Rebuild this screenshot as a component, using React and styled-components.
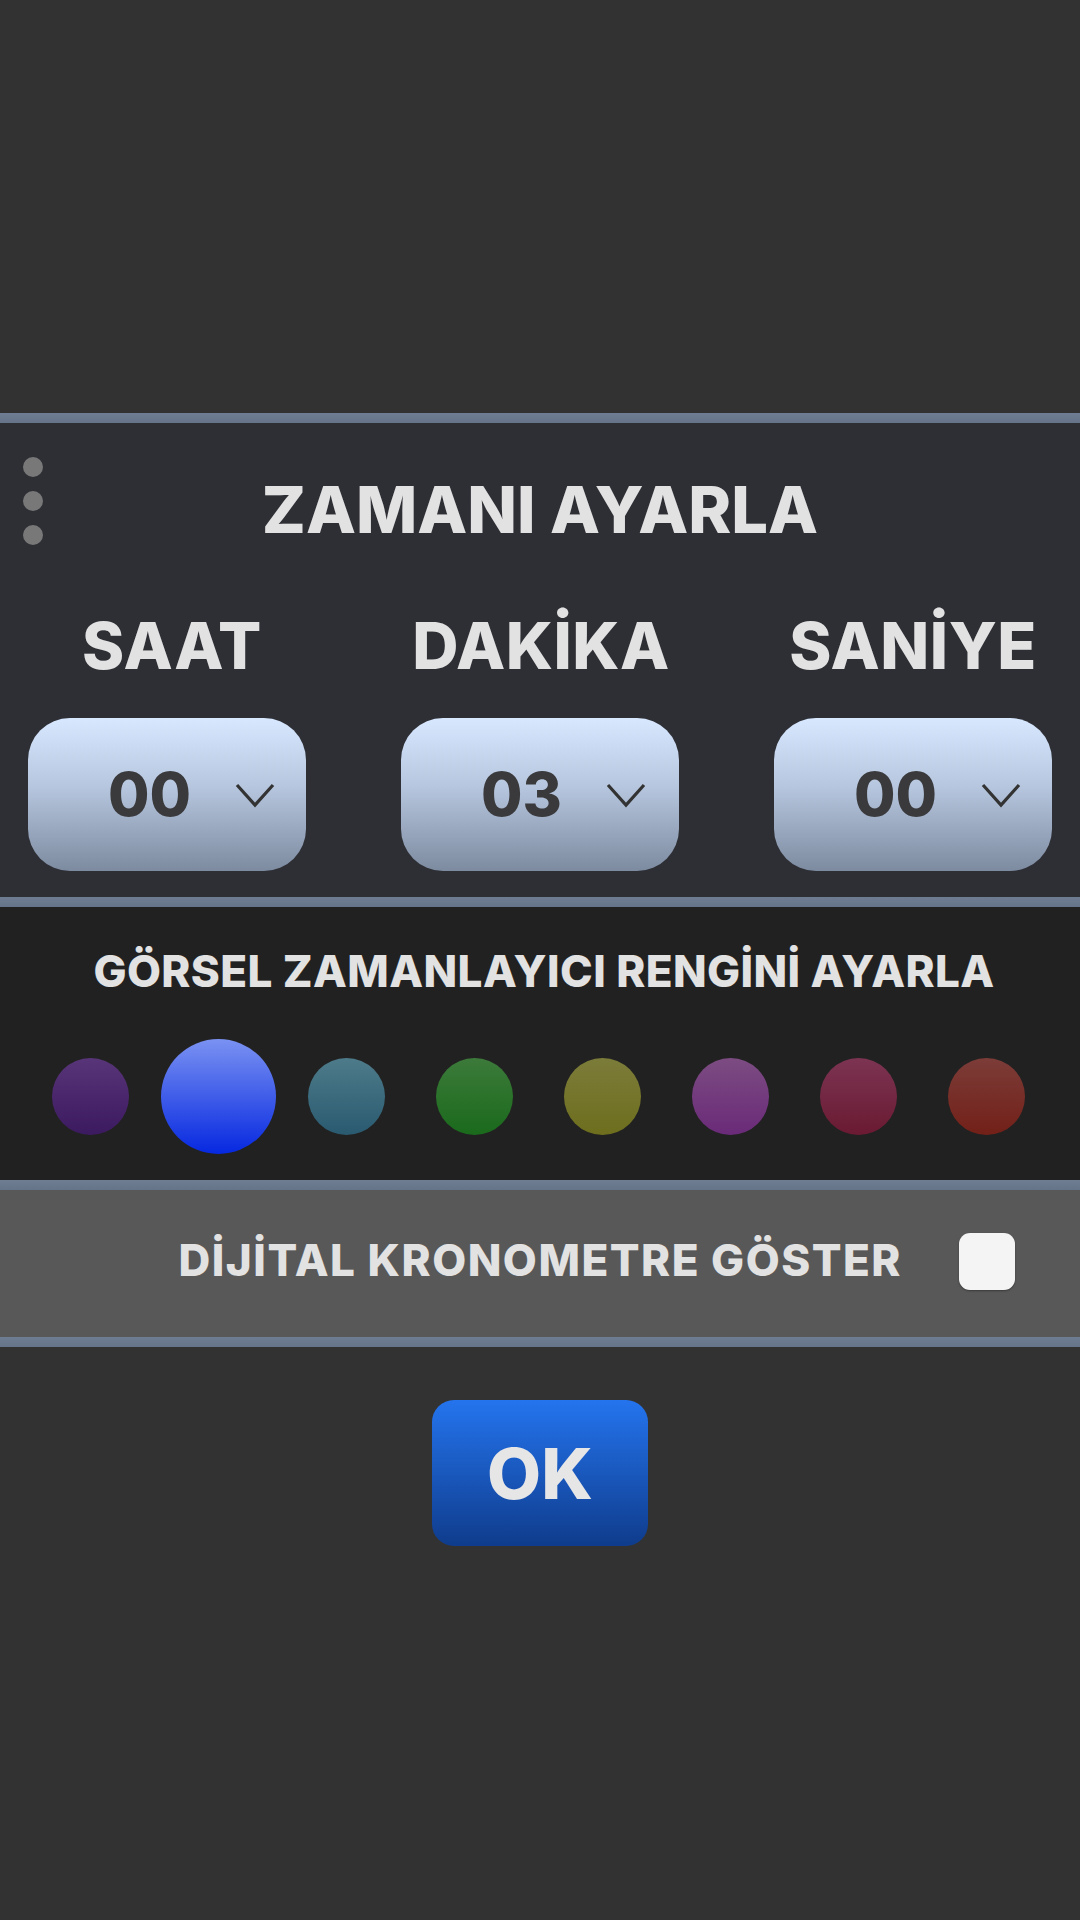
import React from "react";
import styled, { createGlobalStyle } from "styled-components";

const Global = createGlobalStyle`
  html, body { margin: 0; padding: 0; background: #323232; }
  body { font-family: "Inter", "Noto Sans", sans-serif; }
  * { box-sizing: border-box; }
`;

const Page = styled.div`
  width: 1080px;
  min-height: 1920px;
  background: #323232;
  display: flex;
  flex-direction: column;
  padding-top: 413px;
`;

const Divider = styled.div`
  height: 10px;
  background: linear-gradient(#6f7d93, #66748a);
`;

const TimeSection = styled.section`
  position: relative;
  background: #2e2f35;
  height: 474px;
  display: flex;
  flex-direction: column;
  align-items: center;
`;

const MenuDots = styled.div`
  position: absolute;
  left: 23px;
  top: 34px;
  display: flex;
  flex-direction: column;
  gap: 14px;
`;

const Dot = styled.span`
  width: 20px;
  height: 20px;
  border-radius: 50%;
  background: #787878;
`;

const Title = styled.h1`
  margin: 0;
  padding-top: ${(p) => p.$pt || 0}px;
  font-size: ${(p) => p.$size}px;
  font-weight: 800;
  line-height: 1;
  color: #e2e2e2;
  letter-spacing: ${(p) => p.$ls || 0}px;
  white-space: nowrap;
  transform: translateX(${(p) => p.$dx || 0}px);
`;

const Columns = styled.div`
  width: 100%;
  display: flex;
  justify-content: space-between;
  padding: 0 28px;
  margin-top: 72px;
`;

const Column = styled.div`
  width: 278px;
  display: flex;
  flex-direction: column;
  align-items: center;
`;

const Label = styled.div`
  font-size: 64px;
  font-weight: 800;
  line-height: 1;
  color: #e2e2e2;
  white-space: nowrap;
  letter-spacing: 0.5px;
  padding-left: ${(p) => p.$shift || 0}px;
`;

const Select = styled.div`
  margin-top: 40px;
  width: 278px;
  height: 153px;
  border-radius: 42px;
  background: linear-gradient(#d8e8ff 0%, #b6c6de 45%, #7d8ba0 100%);
  display: flex;
  align-items: center;
  padding-left: 80px;
  gap: 44px;
`;

const Value = styled.span`
  font-size: 60px;
  font-weight: 800;
  color: #3a3a3c;
  line-height: 1;
  margin-top: -2px;
`;

const ColorSection = styled.section`
  background: #212121;
  height: 273px;
  display: flex;
  flex-direction: column;
  align-items: center;
`;

const Swatches = styled.div`
  width: 100%;
  display: grid;
  grid-template-columns: repeat(8, 128px);
  padding-left: 26px;
  margin-top: 45px;
  align-items: center;
  height: 116px;
`;

const Cell = styled.div`
  display: flex;
  justify-content: center;
`;

const Swatch = styled.div`
  width: ${(p) => (p.$big ? 115 : 77)}px;
  height: ${(p) => (p.$big ? 115 : 77)}px;
  border-radius: 50%;
  background: linear-gradient(${(p) => p.$top}, ${(p) => p.$bottom});
`;

const CheckRow = styled.section`
  background: #585858;
  height: 147px;
  display: flex;
  align-items: center;
  justify-content: flex-end;
  padding-right: 65px;
  padding-bottom: 8px;
  gap: 57px;
`;

const CheckLabel = styled.span`
  font-size: 44px;
  font-weight: 800;
  color: #e2e2e2;
  white-space: nowrap;
  line-height: 1;
  letter-spacing: 1.5px;
`;

const CheckBox = styled.div`
  width: 56px;
  height: 57px;
  border-radius: 11px;
  background: #f4f4f4;
  box-shadow: 0 1px 2px rgba(0, 0, 0, 0.35);
  margin-top: 4px;
`;

const ButtonArea = styled.div`
  display: flex;
  justify-content: center;
  padding-top: 53px;
`;

const OkButton = styled.button`
  width: 216px;
  height: 146px;
  border: none;
  border-radius: 22px;
  background: linear-gradient(#2474ee, #0f3c8c);
  color: #e6e6e6;
  font-family: "Inter", "Noto Sans", sans-serif;
  font-size: 70px;
  font-weight: 800;
  display: flex;
  align-items: center;
  justify-content: center;
  padding: 0;
`;

const Chevron = () => (
  <svg width="40" height="26" viewBox="0 0 40 26">
    <polyline points="2,3 20,23 38,3" fill="none" stroke="#333" strokeWidth="3.2" />
  </svg>
);

const columns = [
  { label: "SAAT", value: "00", shift: 10 },
  { label: "DAKİKA", value: "03", shift: 2 },
  { label: "SANİYE", value: "00", shift: 0 },
];

const swatches = [
  ["#583478", "#3c1a60"],
  ["#7a92f2", "#0628e0", true],
  ["#4d7b8a", "#2a5a70"],
  ["#3c7a3a", "#1a6a1c"],
  ["#7c7c3a", "#6e6e1e"],
  ["#7c4c82", "#6a2a78"],
  ["#7c3452", "#6a1a32"],
  ["#7c3c38", "#722018"],
];

export default function App() {
  return (
    <Page>
      <Global />
      <Divider />
      <TimeSection>
        <MenuDots>
          <Dot />
          <Dot />
          <Dot />
        </MenuDots>
        <Title $size={65} $pt={54}>ZAMANI AYARLA</Title>
        <Columns>
          {columns.map((c) => (
            <Column key={c.label}>
              <Label $shift={c.shift}>{c.label}</Label>
              <Select>
                <Value>{c.value}</Value>
                <Chevron />
              </Select>
            </Column>
          ))}
        </Columns>
      </TimeSection>
      <Divider />
      <ColorSection>
        <Title $size={44} $pt={42} $ls={0.4} $dx={4}>GÖRSEL ZAMANLAYICI RENGİNİ AYARLA</Title>
        <Swatches>
          {swatches.map(([t, b, big], i) => (
            <Cell key={i}>
              <Swatch $top={t} $bottom={b} $big={big} />
            </Cell>
          ))}
        </Swatches>
      </ColorSection>
      <Divider />
      <CheckRow>
        <CheckLabel>DİJİTAL KRONOMETRE GÖSTER</CheckLabel>
        <CheckBox />
      </CheckRow>
      <Divider />
      <ButtonArea>
        <OkButton>OK</OkButton>
      </ButtonArea>
    </Page>
  );
}
